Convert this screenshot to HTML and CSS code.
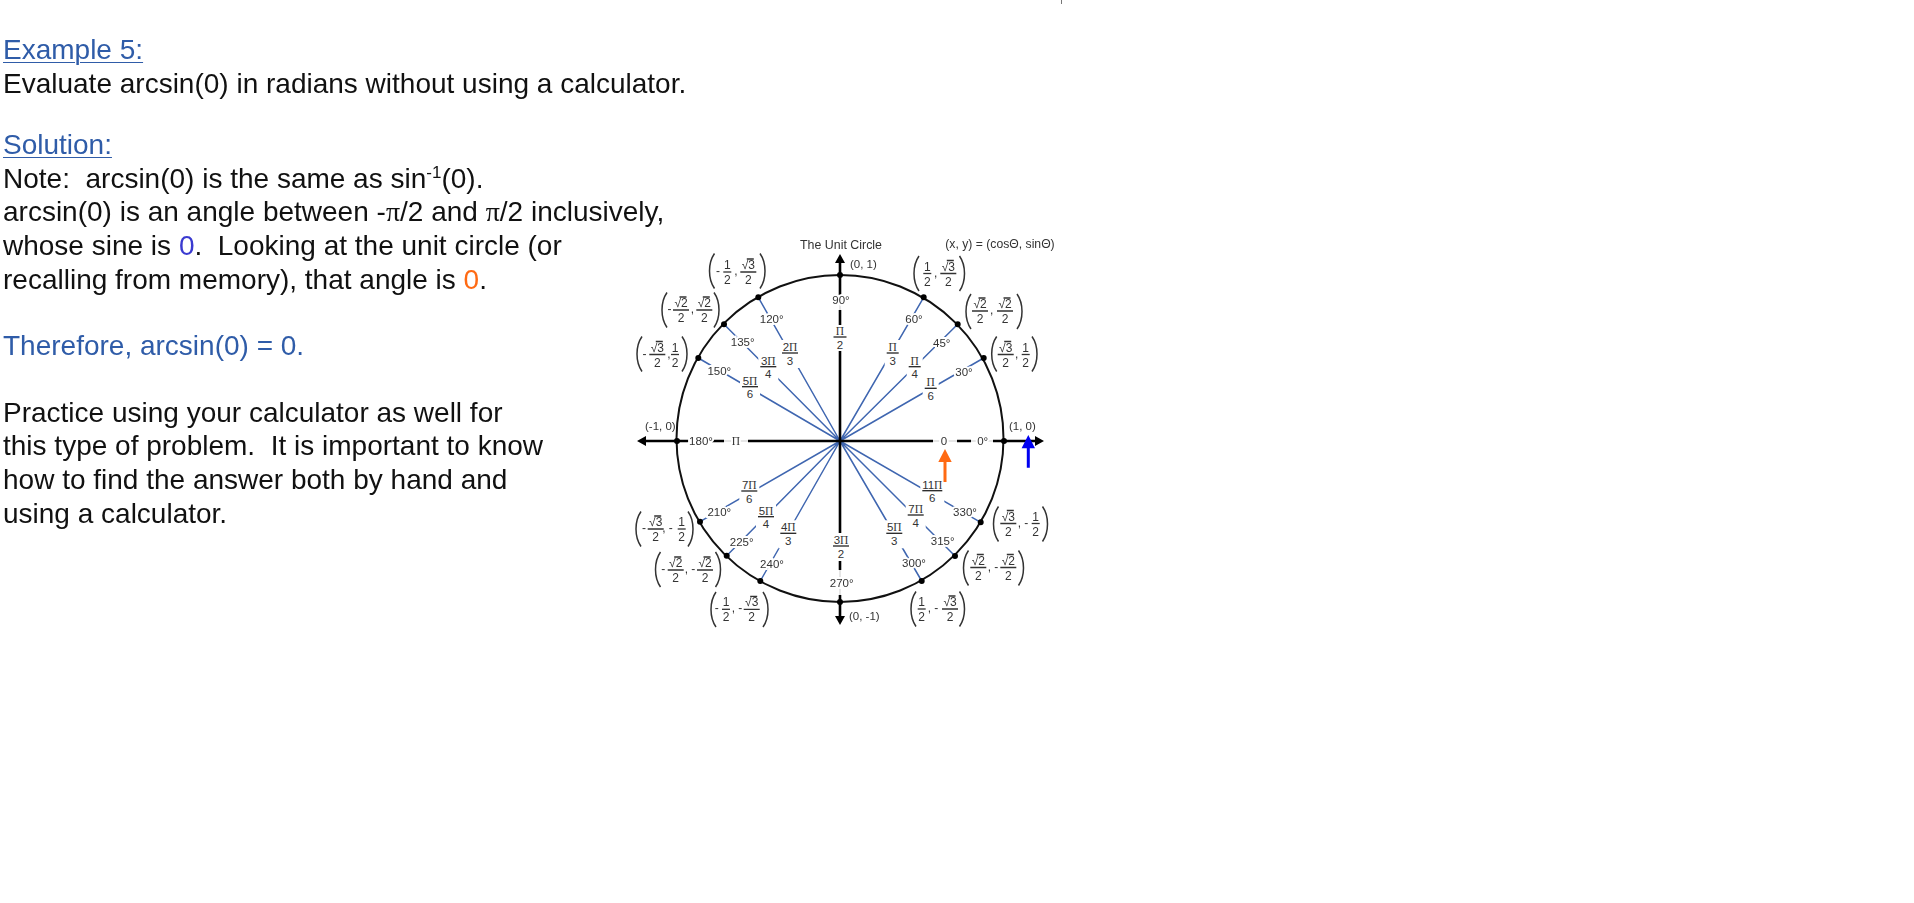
FILE: index.html
```html
<!DOCTYPE html>
<html lang="en">
<head>
    <meta charset="UTF-8">
    <meta name="viewport" content="width=device-width, initial-scale=1.0">
    <title>Example 5</title>
    <link rel="stylesheet" href="styles.css">
</head>
<body>

<span class="tick"></span>

<div class="intro">
    <h2 class="heading">Example 5:</h2>
    <p>Evaluate arcsin(0) in radians without using a calculator.</p>
    <h2 class="heading solution">Solution:</h2>
    <p>Note:&nbsp; arcsin(0) is the same as sin<sup>-1</sup>(0).</p>
    <p>arcsin(0) is an angle between -<span class="pi">π</span>/2 and <span class="pi">π</span>/2 inclusively,</p>
</div>

<div class="row">
    <div class="rest">
        <p>whose sine is <span class="blue">0</span>.&nbsp; Looking at the unit circle (or</p>
        <p>recalling from memory), that angle is <span class="orange">0</span>.</p>
        <p class="answer">Therefore, arcsin(0) = 0.</p>
        <p class="practice">Practice using your calculator as well for</p>
        <p>this type of problem.&nbsp; It is important to know</p>
        <p>how to find the answer both by hand and</p>
        <p>using a calculator.</p>
    </div>

    <!-- viewBox uses page coordinates -->
    <svg class="circle" width="470" height="410" viewBox="630 229 470 410">
        <defs>
            <path id="pl" d="M5 0C1.5 5 0 10 0 17.5S1.5 30 5 35"/>
            <path id="pr" d="M0 0C3.5 5 5 10 5 17.5S3.5 30 0 35"/>
        </defs>

        <text class="title" x="841" y="249">The Unit Circle</text>
        <text class="formula" x="1000" y="248">(x, y) = (cosΘ, sinΘ)</text>

        <circle class="ring" cx="840" cy="438.5" r="163.5"/>

        <!-- blue spokes -->
        <path class="spokes" d="M840 441L758.3 297.3M840 441L724 324.3M840 441L698.3 358M840 441L923.7 297.3M840 441L957.7 324.3M840 441L983.7 358M840 441L700 521.7M840 441L726.7 555.7M840 441L760.3 581M840 441L980.7 522.3M840 441L955 556M840 441L921.7 581"/>

        <!-- axes -->
        <path class="axis-faint" d="M690 441H1037M840 295V617"/>
        <path class="axis" d="M646 441H690M712 441H724M748 441H933M957 441H971M993 441H1037M840 262V295M840 310V325M840 348V535M840 556V570M840 595V617"/>
        <path class="head" d="M840 254l5 9h-10zM840 625l5 -9h-10zM637 441l9 -5v10zM1044 441l-9 -5v10z"/>

        <path class="dots" d="M840 275h0M840 602h0M677 441h0M1004 441h0M758.3 297.3h0M724 324.3h0M698.3 358h0M923.7 297.3h0M957.7 324.3h0M983.7 358h0M700 521.7h0M726.7 555.7h0M760.3 581h0M980.7 522.3h0M955 556h0M921.7 581h0"/>

        <text class="pt" x="850" y="268">(0, 1)</text>
        <text class="pt" x="849" y="620">(0, -1)</text>
        <text class="pt" x="1009" y="430">(1, 0)</text>
        <text class="pt" x="645" y="430">(-1, 0)</text>

        <!-- degrees -->
        <text class="deg" x="841" y="304">90°</text>
        <text class="deg" x="771.7" y="323">120°</text>
        <text class="deg" x="742.7" y="346">135°</text>
        <text class="deg" x="719.3" y="374.7">150°</text>
        <text class="deg" x="914" y="323">60°</text>
        <text class="deg" x="941.7" y="346.7">45°</text>
        <text class="deg" x="964" y="376">30°</text>
        <text class="deg" x="701" y="445">180°</text>
        <text class="deg" x="982.7" y="445">0°</text>
        <text class="deg" x="719.3" y="516.3">210°</text>
        <text class="deg" x="741.7" y="545.7">225°</text>
        <text class="deg" x="772" y="568">240°</text>
        <text class="deg" x="841.7" y="587.3">270°</text>
        <text class="deg" x="914" y="567.3">300°</text>
        <text class="deg" x="942.7" y="544.7">315°</text>
        <text class="deg" x="965" y="516.3">330°</text>
        <text class="deg serif" x="736" y="445">Π</text>
        <text class="deg" x="944" y="445">0</text>

        <!-- radian fractions: mask, numerator, denominator, bar at y=0 -->
        <g class="frac" transform="translate(840,337)"><rect x="-8" y="-12" width="16" height="26"/><text y="-2" class="serif">Π</text><text y="11.5">2</text><path d="M-6.5 0h13"/></g>
        <g class="frac" transform="translate(790,353)"><rect x="-10" y="-13" width="20" height="28"/><text y="-2">2<tspan class="serif">Π</tspan></text><text y="11.5">3</text><path d="M-8 0h16"/></g>
        <g class="frac" transform="translate(768.3,366.7)"><rect x="-10" y="-13" width="20" height="28"/><text y="-2">3<tspan class="serif">Π</tspan></text><text y="11.5">4</text><path d="M-8 0h16"/></g>
        <g class="frac" transform="translate(750,386.7)"><rect x="-10" y="-13" width="20" height="28"/><text y="-2">5<tspan class="serif">Π</tspan></text><text y="11.5">6</text><path d="M-8 0h16"/></g>
        <g class="frac" transform="translate(892.7,353)"><rect x="-8" y="-13" width="16" height="28"/><text y="-2" class="serif">Π</text><text y="11.5">3</text><path d="M-6 0h12"/></g>
        <g class="frac" transform="translate(914.7,366.7)"><rect x="-8" y="-13" width="16" height="28"/><text y="-2" class="serif">Π</text><text y="11.5">4</text><path d="M-6 0h12"/></g>
        <g class="frac" transform="translate(930.7,388.3)"><rect x="-8" y="-13" width="16" height="28"/><text y="-2" class="serif">Π</text><text y="11.5">6</text><path d="M-6 0h12"/></g>
        <g class="frac" transform="translate(749.3,491)"><rect x="-10" y="-13" width="20" height="28"/><text y="-2">7<tspan class="serif">Π</tspan></text><text y="11.5">6</text><path d="M-8 0h16"/></g>
        <g class="frac" transform="translate(766,516.7)"><rect x="-10" y="-13" width="20" height="28"/><text y="-2">5<tspan class="serif">Π</tspan></text><text y="11.5">4</text><path d="M-8 0h16"/></g>
        <g class="frac" transform="translate(788.3,533.3)"><rect x="-10" y="-13" width="20" height="28"/><text y="-2">4<tspan class="serif">Π</tspan></text><text y="11.5">3</text><path d="M-8 0h16"/></g>
        <g class="frac" transform="translate(841,546)"><rect x="-10" y="-13" width="20" height="28"/><text y="-2">3<tspan class="serif">Π</tspan></text><text y="11.5">2</text><path d="M-8 0h16"/></g>
        <g class="frac" transform="translate(932.3,490.7)"><rect x="-12" y="-13" width="24" height="28"/><text y="-2">11<tspan class="serif">Π</tspan></text><text y="11.5">6</text><path d="M-10 0h20"/></g>
        <g class="frac" transform="translate(915.7,515)"><rect x="-10" y="-13" width="20" height="28"/><text y="-2">7<tspan class="serif">Π</tspan></text><text y="11.5">4</text><path d="M-8 0h16"/></g>
        <g class="frac" transform="translate(894.3,533.3)"><rect x="-10" y="-13" width="20" height="28"/><text y="-2">5<tspan class="serif">Π</tspan></text><text y="11.5">3</text><path d="M-8 0h16"/></g>

        <!-- coordinate labels -->
        <g class="coord" transform="translate(0,253.5)"><use href="#pl" x="709.5"/><use href="#pr" x="760"/>
            <text x="718" y="21">-</text><text x="736" y="21">,</text>
            <g transform="translate(727.3,18.5)"><text y="-3">1</text><text y="12">2</text><path d="M-4 0h8"/></g>
            <g transform="translate(748.3,18.5)"><text y="-3">√3</text><text y="12">2</text><path d="M-8 0h16M-1.5 -13h7"/></g></g>
        <g class="coord" transform="translate(0,292.5)"><use href="#pl" x="662"/><use href="#pr" x="714"/>
            <text x="669.5" y="20">-</text><text x="692.3" y="20">,</text>
            <g transform="translate(681,17.5)"><text y="-3">√2</text><text y="12">2</text><path d="M-8 0h16M-1.5 -13h7"/></g>
            <g transform="translate(704.3,17.5)"><text y="-3">√2</text><text y="12">2</text><path d="M-8 0h16M-1.5 -13h7"/></g></g>
        <g class="coord" transform="translate(0,336.5)"><use href="#pl" x="637"/><use href="#pr" x="682"/>
            <text x="644.5" y="21">-</text><text x="669" y="21">,</text>
            <g transform="translate(657.3,18)"><text y="-3">√3</text><text y="12">2</text><path d="M-8 0h16M-1.5 -13h7"/></g>
            <g transform="translate(675,18)"><text y="-3">1</text><text y="12">2</text><path d="M-4 0h8"/></g></g>
        <g class="coord" transform="translate(0,256)"><use href="#pl" x="914"/><use href="#pr" x="959.5"/>
            <text x="935.7" y="21">,</text>
            <g transform="translate(927.3,17.5)"><text y="-3">1</text><text y="12">2</text><path d="M-4 0h8"/></g>
            <g transform="translate(948.3,17.5)"><text y="-3">√3</text><text y="12">2</text><path d="M-8 0h16M-1.5 -13h7"/></g></g>
        <g class="coord" transform="translate(0,294)"><use href="#pl" x="966"/><use href="#pr" x="1017"/>
            <text x="991.7" y="20">,</text>
            <g transform="translate(980,17)"><text y="-3">√2</text><text y="12">2</text><path d="M-8 0h16M-1.5 -13h7"/></g>
            <g transform="translate(1005,17)"><text y="-3">√2</text><text y="12">2</text><path d="M-8 0h16M-1.5 -13h7"/></g></g>
        <g class="coord" transform="translate(0,336.5)"><use href="#pl" x="991.7"/><use href="#pr" x="1032"/>
            <text x="1016.7" y="21">,</text>
            <g transform="translate(1005.7,18)"><text y="-3">√3</text><text y="12">2</text><path d="M-8 0h16M-1.5 -13h7"/></g>
            <g transform="translate(1025.7,18)"><text y="-3">1</text><text y="12">2</text><path d="M-4 0h8"/></g></g>
        <g class="coord" transform="translate(0,511.5)"><use href="#pl" x="636"/><use href="#pr" x="688"/>
            <text x="644" y="20">-</text><text x="667.5" y="20">, -</text>
            <g transform="translate(655.7,17.5)"><text y="-3">√3</text><text y="12">2</text><path d="M-8 0h16M-1.5 -13h7"/></g>
            <g transform="translate(681.7,17.5)"><text y="-3">1</text><text y="12">2</text><path d="M-4 0h8"/></g></g>
        <g class="coord" transform="translate(0,552)"><use href="#pl" x="655.5"/><use href="#pr" x="715.5"/>
            <text x="663.3" y="21">-</text><text x="690" y="21">, -</text>
            <g transform="translate(675.7,18)"><text y="-3">√2</text><text y="12">2</text><path d="M-8 0h16M-1.5 -13h7"/></g>
            <g transform="translate(705,18)"><text y="-3">√2</text><text y="12">2</text><path d="M-8 0h16M-1.5 -13h7"/></g></g>
        <g class="coord" transform="translate(0,592)"><use href="#pl" x="711"/><use href="#pr" x="763"/>
            <text x="716.7" y="20">-</text><text x="737" y="20">, -</text>
            <g transform="translate(726,17.3)"><text y="-3">1</text><text y="12">2</text><path d="M-4 0h8"/></g>
            <g transform="translate(751.7,17.3)"><text y="-3">√3</text><text y="12">2</text><path d="M-8 0h16M-1.5 -13h7"/></g></g>
        <g class="coord" transform="translate(0,506.5)"><use href="#pl" x="993.5"/><use href="#pr" x="1042.5"/>
            <text x="1023" y="20">, -</text>
            <g transform="translate(1008.3,17)"><text y="-3">√3</text><text y="12">2</text><path d="M-8 0h16M-1.5 -13h7"/></g>
            <g transform="translate(1035.7,17)"><text y="-3">1</text><text y="12">2</text><path d="M-4 0h8"/></g></g>
        <g class="coord" transform="translate(0,550.5)"><use href="#pl" x="963.5"/><use href="#pr" x="1018.5"/>
            <text x="993" y="20">, -</text>
            <g transform="translate(978.3,17)"><text y="-3">√2</text><text y="12">2</text><path d="M-8 0h16M-1.5 -13h7"/></g>
            <g transform="translate(1008.3,17)"><text y="-3">√2</text><text y="12">2</text><path d="M-8 0h16M-1.5 -13h7"/></g></g>
        <g class="coord" transform="translate(0,591.5)"><use href="#pl" x="911"/><use href="#pr" x="959.5"/>
            <text x="933" y="20">, -</text>
            <g transform="translate(921.7,17.5)"><text y="-3">1</text><text y="12">2</text><path d="M-4 0h8"/></g>
            <g transform="translate(950,17.5)"><text y="-3">√3</text><text y="12">2</text><path d="M-8 0h16M-1.5 -13h7"/></g></g>

        <!-- orange and blue pointers -->
        <path class="arrow-orange" d="M945 449l6.7 13h-5.2v20h-3v-20h-5.2z"/>
        <path class="arrow-blue" d="M1028.3 435l6.7 13.3h-5.2v19.5h-3v-19.5h-5.2z"/>
    </svg>
</div>

</body>
</html>
```

FILE: styles.css
```css
*{margin: 0; padding: 0; box-sizing: border-box;}

body{
    font-family: "Liberation Sans", Arial, sans-serif;
    font-size: 28px;
    line-height: 33.6px;
    color: #111;
    background: #fff;
    position: relative;
}
p, .heading{
    font-size: 28px;
    font-weight: normal;
    white-space: nowrap;
    filter: blur(0.35px);
}
sup{
    font-size: 17px;
    line-height: 0;
}
.heading{
    color: #2f5ca8;
    text-decoration: underline;
    text-decoration-thickness: 1px;
    text-underline-offset: 3px;
}
.pi{font-family: "Liberation Serif", serif;}
.blue{color: #3a3ad0;}
.orange{color: #ff6a13;}

.tick{
    position: absolute;
    left: 1061px;
    top: 0;
    width: 1px;
    height: 4px;
    background: #777;
}
.intro{
    padding: 33.2px 0 0 3px;
}
.solution{
    margin-top: 27.8px;
}
.row{
    display: flex;
}
.rest{
    flex: none;
    width: 630px;
    padding-left: 3px;
}
.answer{
    color: #2f5ca8;
    margin-top: 33px;
}
.practice{
    margin-top: 33px;
}

.circle{
    flex: none;
    display: block;
    filter: blur(0.35px);
}
.circle text{
    font-family: "Liberation Sans", Arial, sans-serif;
    fill: #333;
}
.title{
    font-size: 12.4px;
    text-anchor: middle;
}
.formula{
    font-size: 12.2px;
    text-anchor: middle;
}
.ring{
    fill: none;
    stroke: #111;
    stroke-width: 2;
}
.spokes{
    fill: none;
    stroke: #3f66b0;
    stroke-width: 1.5;
}
.axis-faint{
    fill: none;
    stroke: #e6e6e6;
    stroke-width: 2;
}
.axis{
    fill: none;
    stroke: #000;
    stroke-width: 2.6;
}
.head{fill: #000;}
.dots{
    fill: none;
    stroke: #000;
    stroke-width: 6;
    stroke-linecap: round;
}
.circle .pt{font-size: 11.5px;}
.deg{
    font-size: 11.5px;
    text-anchor: middle;
    paint-order: stroke;
    stroke: #fff;
    stroke-width: 4px;
}
.frac rect{fill: #fff;}
.frac text{
    font-size: 11.5px;
    text-anchor: middle;
}
.circle .serif{font-family: "Liberation Serif", serif;}
.frac path{
    fill: none;
    stroke: #222;
    stroke-width: 1.3;
}
.coord text{
    font-size: 12px;
    text-anchor: middle;
}
.coord path{
    fill: none;
    stroke: #333;
    stroke-width: 1.3;
}
.coord use{
    fill: none;
    stroke: #333;
    stroke-width: 1.5;
}
.arrow-orange{fill: #ff6a13;}
.arrow-blue{fill: #0000f0;}
```
